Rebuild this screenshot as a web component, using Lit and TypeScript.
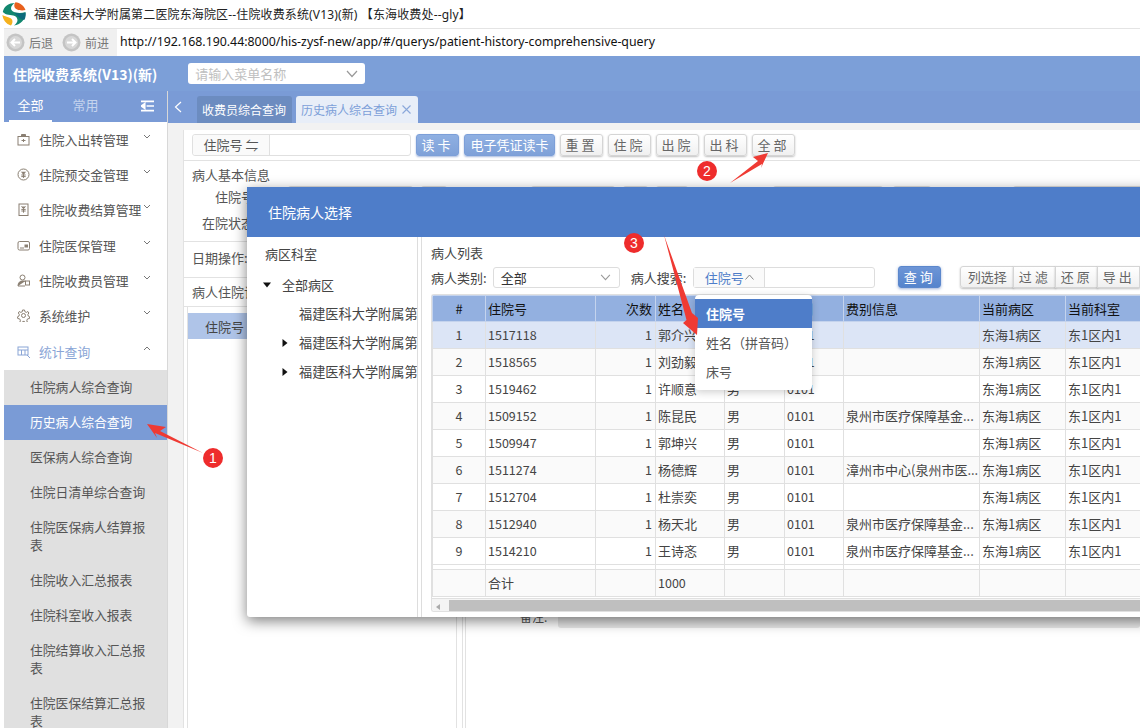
import { LitElement, html, css, svg } from "lit";
import { customElement } from "lit/decorators.js";

const ICONS: Record<string, unknown> = {
  box: svg`<rect x="1" y="3.5" width="11" height="8.5" fill="none"/><path d="M4.5 3.5V1.5h4v2M4.5 7.5h4M6.5 6v3"/>`,
  yen: svg`<circle cx="6.5" cy="6.5" r="5.5" fill="none"/><path d="M4.5 3.8l2 2.5 2-2.5M4.3 7h4.4M6.5 6.3v3.6M4.3 8.6h4.4"/>`,
  bill: svg`<rect x="2" y="1" width="9" height="11.5" fill="none"/><path d="M4.5 3.5l2 2.2 2-2.2M4.3 6.4h4.4M6.5 5.7v4M4.3 8h4.4"/>`,
  wallet: svg`<rect x="1" y="2.5" width="11.5" height="8.5" rx="1.5" fill="none"/><rect x="8" y="6" width="2.5" height="2" /><path d="M3 9h4"/>`,
  user: svg`<circle cx="5.5" cy="3.5" r="2.5" fill="none"/><path d="M1 12c0-3.5 2-5 4.500-5h3M1 12h7"/><rect x="8.500" y="7" width="4" height="4" fill="none"/>`,
  gear: svg`<circle cx="6.500" cy="6.500" r="2" fill="none"/><path fill="none" d="M5.500 1h2l.4 1.700 1.500.7 1.500-.9 1 1.500-1 1.400.3 1.600 1.500.8-.3 1.800-1.700.2-.9 1.400.5 1.600-1.700.8-1.200-1.200h-1.600l-1.200 1.200-1.700-.8.5-1.600-.9-1.400-1.700-.2-.3-1.800 1.500-.8.300-1.600-1-1.400 1-1.500 1.500.9 1.500-.7z"/>`,
  stat: svg`<rect x="1" y="2" width="10" height="8" fill="none"/><path d="M1 5h10M4.500 5v5M8 5v5M10 10l3 3"/>`,
};

const ROWS: [string, string, string, string, string, string][] = [
  ["1", "1517118", "郭介兴", "男", "0101", ""],
  ["2", "1518565", "刘劲毅", "男", "0101", ""],
  ["3", "1519462", "许顺意", "男", "0101", ""],
  ["4", "1509152", "陈昆民", "男", "0101", "泉州市医疗保障基金..."],
  ["5", "1509947", "郭坤兴", "男", "0101", ""],
  ["6", "1511274", "杨德辉", "男", "0101", "漳州市中心(泉州市医..."],
  ["7", "1512704", "杜崇奕", "男", "0101", ""],
  ["8", "1512940", "杨天北", "男", "0101", "泉州市医疗保障基金..."],
  ["9", "1514210", "王诗忞", "男", "0101", "泉州市医疗保障基金..."],
];

const PILLS: [number, number][] = [
  [34, 125], [8, 26], [84, 84], [8, 25], [8, 32], [85, 110], [10, 38], [82, 150],
];

@customElement("app-root")
export class AppRoot extends LitElement {
  static styles = css`
    :host {
      display: block;
      position: relative;
      width: 1140px;
      height: 728px;
      overflow: hidden;
      background: #fff;
      font-family: "Noto Sans CJK SC", "Liberation Sans", sans-serif;
      font-size: 13px;
      color: #555;
    }
    .title {
      height: 28px;
      display: flex;
      align-items: center;
      padding-left: 2px;
      gap: 8px;
      font-family: "Noto Sans", "Noto Sans CJK SC", sans-serif;
      font-size: 12px;
      letter-spacing: .14px;
      color: #222;
      background: #fff;
    }
    .logo { width: 24px; height: 24px; flex: none; }
    .win { border-left: 4px solid #fff; box-shadow: inset 1px 0 0 #d0d0d0; }
    .addr {
      height: 28px;
      display: flex;
      align-items: center;
      background: #f0f0f0;
      font-size: 12px;
      color: #777;
      border-top: 1px solid #e4e4e4;
      box-sizing: border-box;
    }
    .nav {
      display: flex;
      align-items: center;
      gap: 4px;
    }
    .nav svg { width: 19px; height: 19px; }
    .nav.back { margin-left: 2px; }
    .nav.fwd { margin-left: 9px; }
    .url {
      margin-left: 8px;
      flex: 1;
      align-self: stretch;
      background: #fff;
      color: #111;
      line-height: 26px;
      padding-left: 3px;
      font-family: "Noto Sans", sans-serif;
      font-size: 12.350px;
      white-space: nowrap;
    }
    .top {
      height: 35px;
      background: #7c9fd8;
      display: flex;
      align-items: center;
      padding-left: 9px;
      color: #fff;
      font-weight: 700;
      font-size: 14px;
    }
    .search {
      margin-left: 31px;
      width: 177px;
      height: 21px;
      background: #fff;
      border-radius: 3px;
      font-weight: 400;
      font-size: 13px;
      color: #c0c0c0;
      display: flex;
      align-items: center;
      justify-content: space-between;
      padding: 0 7px;
      box-sizing: border-box;
    }
    .search svg { width: 12px; height: 8px; }
    .body { display: flex; height: 644px; overflow: hidden; }
    .side {
      width: 164px;
      flex: none;
      background: #fff;
      border-right: 1px solid #d8d8d8;
      box-sizing: border-box;
      font-size: 12.800px;
    }
    .side-head {
      height: 31px;
      background: #7a9bd6;
      display: flex;
      align-items: stretch;
      position: relative;
      color: #fff;
    }
    .side-tab {
      width: 43px;
      text-align: center;
      line-height: 28px;
      margin-left: 5px;
      font-size: 13px;
      box-sizing: border-box;
    }
    .side-tab.on { border-bottom: 2px solid #fff; }
    .side-tab.off { margin-left: 12px; color: #c5d4ee; }
    .side-head svg { margin: 9px 0 0 auto; width: 13px; height: 12px; margin-right: 13px; }
    .m {
      height: 35.200px;
      display: flex;
      align-items: center;
      padding-left: 13px;
      color: #555;
      white-space: nowrap;
    }
    .m svg.i {
      width: 13px;
      height: 13px;
      margin-right: 9px;
      flex: none;
      stroke: #8a7f72;
      fill: #8a7f72;
      stroke-width: 1;
    }
    .m svg.i * { stroke: inherit; }
    .m .c { position: absolute; left: 143px; width: 8px; height: 5px; margin-top: -6px; }
    .m.stat { color: #8aa5d6; height: 36.800px; padding-bottom: 1px; box-sizing: border-box; }
    .m.stat svg.i { stroke: #8aa5d6; fill: #8aa5d6; }
    .sub { background: #e0e0e0; }
    .sub div { padding: 8.500px 14px 8.500px 26px; line-height: 18px; color: #555; }
    .sub div.on { background: #7a9bd6; color: #fff; }
    .main {
      flex: 1;
      min-width: 0;
      display: flex;
      flex-direction: column;
      background: #f2f2f2;
    }
    .tabs {
      height: 32px;
      background: #7a9bd6;
      display: flex;
      align-items: flex-end;
      color: #fff;
      flex: none;
    }
    .arr { width: 29px; align-self: center; display: flex; padding-left: 6px; box-sizing: border-box; margin-top: -1px; border-left: 0; }
    .arr svg { width: 8px; height: 12px; }
    .tab {
      height: 27px;
      line-height: 27px;
      padding: 0 5px;
      border-radius: 3px 3px 0 0;
      font-size: 12px;
      white-space: nowrap;
    }
    .tab.dark { background: #6c8cc0; width: 85px; margin-right: 4px; }
    .tab.light { background: #e8eef8; color: #7c9fd8; width: 122px; box-sizing: border-box; display: flex; align-items: center; gap: 5px; }
    .tab.light svg { width: 9px; height: 9px; }
    .panel {
      margin: 7px 0 0 15px;
      flex: 1;
      background: #fff;
      border-left: 1px solid #e2e2e2;
      display: flex;
      flex-direction: column;
      min-height: 0;
    }
    .tool {
      flex: none;
      display: flex;
      align-items: center;
      padding-left: 8px;
      gap: 5px;
      border-bottom: 1px solid #e2e2e2;
      box-sizing: border-box;
      height: 31px;
    }
    .group {
      width: 219px;
      height: 22px;
      border: 1px solid #e0e0e0;
      border-radius: 3px;
      box-sizing: border-box;
      display: flex;
      align-items: stretch;
    }
    .group span {
      width: 76px;
      background: #fafafa;
      border-right: 1px solid #e0e0e0;
      line-height: 20px;
      text-align: center;
      border-radius: 3px 0 0 3px;
    }
    .btn {
      height: 22px;
      min-width: 43px;
      box-sizing: border-box;
      border: 1px solid #d5d5d5;
      border-radius: 3px;
      background: linear-gradient(#fff, #f0f0f0);
      box-shadow: 0 1px 2px rgba(0, 0, 0, .25);
      text-align: center;
      line-height: 20px;
      color: #666;
      letter-spacing: 3px;
      white-space: nowrap;
    }
    .btn.pri {
      background: linear-gradient(#8fb0e2, #7fa1d8);
      border-color: #7c9fd8;
      color: #fff;
      box-shadow: 0 1px 2px rgba(60, 100, 180, .45);
    }
    .btn.tight { letter-spacing: 0; width: 91px; }
    .info { padding: 5px 0 0 8px; height: 81px; border-bottom: 1px solid #e2e2e2; box-sizing: border-box; flex: none; color: #555; }
    .info p { margin: 0; line-height: 18px; }
    .info .l { margin: 2px 0 0 23px; display: flex; align-items: center; height: 22px; line-height: 22px; white-space: nowrap; }
    .pill { height: 22px; background: #dedede; border-radius: 3px; flex: none; }
    .info .s { margin: 6px 0 0 10px; }
    .row { padding-left: 8px; height: 36px; line-height: 31px; border-bottom: 1px solid #e2e2e2; box-sizing: border-box; flex: none; }
    .row.b { height: 29px; line-height: 27px; }
    .split { flex: 1; display: flex; min-height: 0; padding-left: 3px; }
    .lp { width: 270px; padding-top: 6px; border-left: 1px solid #e2e2e2; border-right: 1px solid #e2e2e2; box-sizing: border-box; flex: none; }
    .lp .h { width: 59px; height: 26px; background: #afc4e8; line-height: 28px; color: #444; box-sizing: border-box; padding-left: 17px; white-space: nowrap; }
    .gl { width: 6px; border-right: 1px solid #e2e2e2; flex: none; box-sizing: border-box; }
    .rp { margin-left: 2px; border-left: 1px solid #e2e2e2; flex: 1; position: relative; }
    .note { position: absolute; left: 54px; top: 302px; font-size: 12px; color: #555; line-height: 16px; }
    .note-in { position: absolute; left: 92px; top: 302px; right: 0; height: 19px; background: #e8e8e8; border-radius: 3px; }

    .modal {
      position: absolute;
      left: 247px;
      top: 187px;
      width: 1000px;
      height: 430px;
      background: #fff;
      border-radius: 3px;
      box-shadow: 0 4px 14px rgba(0, 0, 0, .5);
      display: flex;
      flex-direction: column;
    }
    .mh {
      height: 50px;
      background: #4e7dc9;
      color: #fff;
      font-size: 14px;
      line-height: 51px;
      padding-left: 21px;
      flex: none;
    }
    .mb { flex: 1; display: flex; min-height: 0; }
    .tree { width: 171px; flex: none; padding: 1px 0 0 18px; box-sizing: border-box; border-right: 1px solid #ddd; overflow: hidden; white-space: nowrap; color: #444; }
    .tree div { height: 29px; line-height: 20px; display: flex; align-items: center; position: relative; font-size: 13px; }
    .tree div.hd { height: 32px; }
    .tree .n1 { padding-left: 17px; }
    .tree .n2 { padding-left: 34px; font-size: 13.200px; }
    .tree svg { position: absolute; width: 8px; height: 8px; }
    .gut { width: 4px; border-right: 1px solid #ddd; flex: none; box-sizing: border-box; }
    .right { flex: 1; min-width: 0; padding: 6px 0 0 9px; }
    .right .t { line-height: 20px; color: #444; }
    .filters { display: flex; align-items: center; height: 22px; margin-top: 3px; color: #444; }
    .sel {
      width: 127px;
      height: 21px;
      margin-left: 6px;
      border: 1px solid #ddd;
      border-radius: 3px;
      box-sizing: border-box;
      display: flex;
      align-items: center;
      justify-content: space-between;
      padding: 0 8px 0 7px;
      color: #333;
    }
    .sel svg { width: 11px; height: 7px; }
    .q-label { margin-left: 11px; }
    .sg {
      margin-left: 7px;
      width: 182px;
      height: 21px;
      border: 1px solid #ddd;
      border-radius: 3px;
      box-sizing: border-box;
      display: flex;
    }
    .sg span { width: 71px; border-right: 1px solid #ddd; background: #fafafa; color: #4e7dc9; text-align: center; display: flex; align-items: center; justify-content: center; gap: 1px; box-sizing: border-box; }
    .sg svg { width: 9px; height: 6px; }
    .query { width: 43px; height: 22px; box-sizing: border-box; margin-left: 23px; border-radius: 3px; border: 1px solid #5b87cc; background: linear-gradient(#6d95d6, #5584cc); color: #fff; text-align: center; line-height: 20px; letter-spacing: 3px; box-shadow: 0 1px 3px rgba(60, 100, 180, .5); }
    .bg { display: flex; margin-left: 19px; }
    .bg .btn { border-radius: 0; margin-left: -1px; letter-spacing: 3px; min-width: 43px; }
    .bg .btn:first-child { border-radius: 3px 0 0 3px; width: 54px; margin-left: 0; letter-spacing: 0; }
    .tw {
      margin: 6px 0 0 0;
      border: 1px solid #e0e0e0;
      border-right: 0;
      border-radius: 3px 0 0 3px;
      width: 780px;
      height: 316px;
      overflow: hidden;
    }
    table { border-collapse: collapse; table-layout: fixed; width: 780px; font-size: 12.500px; color: #444; }
    th, td { border: 1px solid #e0e0e0; padding: 0 2px; text-align: left; white-space: nowrap; overflow: hidden; height: 27px; box-sizing: border-box; line-height: 16px; }
    th { background: #93b0e0; border-color: #c4d3ed; color: #111; font-size: 13px; font-weight: 400; height: 26px; }
    td.c, th.c { text-align: center; }
    td.r, th.r { text-align: right; padding-right: 3px; }
    td.name, td.info-col { font-size: 13px; }
    tr.sel-row td { background: #dce5f6; }
    tr.alt td { background: #fafafa; }
    tr.gap td { height: 5px; padding: 0; line-height: 0; }
    tr.foot td { background: #fafafa; }
    .hs { height: 15px; margin-top: 1px; background: #f4f4f4; display: flex; align-items: center; padding-left: 4px; border-top: 1px solid #e0e0e0; }
    .hs i { width: 0; height: 0; border: 3px solid transparent; border-right: 4px solid #aaa; border-left: 0; }
    .hs b { flex: 1; height: 13px; background: #bfbfbf; margin-left: 9px; }
    .menu {
      position: absolute;
      left: 695px;
      top: 295px;
      width: 117px;
      height: 95px;
      padding-top: 4px;
      box-sizing: border-box;
      background: #fff;
      border-radius: 4px;
      box-shadow: 0 2px 8px rgba(0, 0, 0, .2);
      color: #555;
    }
    .menu div { height: 29px; line-height: 29px; padding-left: 11px; white-space: nowrap; }
    .menu div.on { background: #4e7dc9; color: #fff; font-weight: 700; }
    .menu div.x { height: 29px; line-height: 29px; }
    .ann { position: absolute; left: 0; top: 0; width: 1140px; height: 728px; pointer-events: none; }
    .ann text { font-family: "Liberation Sans", sans-serif; font-size: 14px; fill: #fff; text-anchor: middle; }
  `;

  private menuRow(label: string, icon: string) {
    return html`<div class="m"><svg class="i" viewBox="0 0 13 13">${ICONS[icon]}</svg>${label}
      <svg class="c" viewBox="0 0 8 5"><path d="M1 1l3 3 3-3" fill="none" stroke="#777"/></svg></div>`;
  }

  private navIcon(dir: "l" | "r") {
    const d = dir === "l" ? "M14 9.500H6M9 6L5.500 9.500 9 13" : "M5 9.500h8M10 6l3.500 3.500L10 13";
    return html`<svg viewBox="0 0 19 19"><circle cx="9.500" cy="9.500" r="9" fill="#c4c4c4"/><circle cx="9.500" cy="9.500" r="6.500" fill="#d8d8d8"/><path d="${d}" fill="none" stroke="#fff" stroke-width="2"/></svg>`;
  }

  render() {
    const chev = html`<svg viewBox="0 0 12 8"><path d="M1 1l5 5.500L11 1" fill="none" stroke="#999" stroke-width="1.200"/></svg>`;
    return html`
      <div class="title">
        <svg class="logo" viewBox="0 0 24 24">
          <circle cx="12" cy="12" r="11.800" fill="#fff"/>
          <path d="M.8 10C2 4 7 1 13 1c-4 2-5.500 6.500-2 8.500 4 2 9 1.500 12.500 .5.800 7-5 13-11.500 13.500 4.500-3 4.500-7.500.8-9.500C9 12.500 4 13.500.8 10z" fill="#12876f"/>
          <path d="M12 10.500c4 1.500 8 1 11.500 .2.400 2.500 0 5-1 7-3 1-5.500-2.500-10.500-7.200z" fill="#0d6a7c"/>
          <path d="M13.500 .3C18 .6 22 4 23.500 8 19 9 13.500 8 12.500 5c-.5-2 0-3.500 1-4.700z" fill="#e8601c"/>
          <path d="M.4 13C4 15 9 15 10.200 18c.7 2 0 4-1.200 5.500C4 22 1 18 .4 13z" fill="#f5b11d"/>
        </svg>
        <span>福建医科大学附属第二医院东海院区--住院收费系统(V13)(新) 【东海收费处--gly】</span>
      </div>
      <div class="win">
        <div class="addr">
          <span class="nav back">${this.navIcon("l")}后退</span>
          <span class="nav fwd">${this.navIcon("r")}前进</span>
          <div class="url">http://192.168.190.44:8000/his-zysf-new/app/#/querys/patient-history-comprehensive-query</div>
        </div>
        <div class="top">住院收费系统(V13)(新)
          <div class="search">请输入菜单名称 ${chev}</div>
        </div>
        <div class="body">
          <aside class="side">
            <div class="side-head">
              <div class="side-tab on">全部</div>
              <div class="side-tab off">常用</div>
              <svg viewBox="0 0 14 12"><path d="M0 1h14M6 6h8M0 11h14M4 3.500L.5 6 4 8.500z" fill="#fff" stroke="#fff" stroke-width="1.800"/></svg>
            </div>
            ${this.menuRow("住院入出转管理", "box")}
            ${this.menuRow("住院预交金管理", "yen")}
            ${this.menuRow("住院收费结算管理", "bill")}
            ${this.menuRow("住院医保管理", "wallet")}
            ${this.menuRow("住院收费员管理", "user")}
            ${this.menuRow("系统维护", "gear")}
            <div class="m stat"><svg class="i" viewBox="0 0 13 13">${ICONS.stat}</svg>统计查询
              <svg class="c" viewBox="0 0 8 5"><path d="M1 4l3-3 3 3" fill="none" stroke="#777"/></svg></div>
            <div class="sub">
              <div>住院病人综合查询</div>
              <div class="on">历史病人综合查询</div>
              <div>医保病人综合查询</div>
              <div>住院日清单综合查询</div>
              <div>住院医保病人结算报表</div>
              <div>住院收入汇总报表</div>
              <div>住院科室收入报表</div>
              <div>住院结算收入汇总报表</div>
              <div>住院医保结算汇总报表</div>
            </div>
          </aside>
          <main class="main">
            <div class="tabs">
              <div class="arr"><svg viewBox="0 0 8 12"><path d="M7 1L1.500 6 7 11" fill="none" stroke="#fff" stroke-width="1.200"/></svg></div>
              <div class="tab dark">收费员综合查询</div>
              <div class="tab light">历史病人综合查询<svg viewBox="0 0 9 9"><path d="M.5 .5l8 8M8.500 .5l-8 8" fill="none" stroke="#8aa8da" stroke-width="1.100"/></svg></div>
            </div>
            <div class="panel">
              <div class="tool">
                <div class="group"><span>住院号 ⇋</span></div>
                <div class="btn pri">读卡</div>
                <div class="btn pri tight">电子凭证读卡</div>
                <div class="btn">重置</div>
                <div class="btn">住院</div>
                <div class="btn">出院</div>
                <div class="btn">出科</div>
                <div class="btn">全部</div>
              </div>
              <div class="info">
                <p>病人基本信息</p>
                <p class="l"><span>住院号</span>${PILLS.map(([m, w]) => html`<span class="pill" style="margin-left:${m}px;width:${w}px"></span>`)}</p>
                <p class="s">在院状态</p>
              </div>
              <div class="row">日期操作:</div>
              <div class="row b">病人住院记录</div>
              <div class="split">
                <div class="lp"><div class="h">住院号</div></div>
                <div class="gl"></div>
                <div class="rp"><span class="note">备注:</span><div class="note-in"></div></div>
              </div>
            </div>
          </main>
        </div>
      </div>

      <section class="modal">
        <div class="mh">住院病人选择</div>
        <div class="mb">
          <div class="tree">
            <div class="hd">病区科室</div>
            <div class="n1"><svg style="left:-2px" viewBox="0 0 8 8"><path d="M0 1.500h8L4 6.500z" fill="#111"/></svg>全部病区</div>
            <div class="n2">福建医科大学附属第二医院</div>
            <div class="n2"><svg style="left:16px" viewBox="0 0 8 8"><path d="M1.500 0v8l5-4z" fill="#111"/></svg>福建医科大学附属第二医院</div>
            <div class="n2"><svg style="left:16px" viewBox="0 0 8 8"><path d="M1.500 0v8l5-4z" fill="#111"/></svg>福建医科大学附属第二医院</div>
          </div>
          <div class="gut"></div>
          <div class="right">
            <div class="t">病人列表</div>
            <div class="filters">
              <span>病人类别:</span>
              <div class="sel">全部 ${chev}</div>
              <span class="q-label">病人搜索:</span>
              <div class="sg"><span>住院号<svg viewBox="0 0 9 6"><path d="M.5 5.500L4.500 1l4 4.500" fill="none" stroke="#888"/></svg></span></div>
              <div class="query">查询</div>
              <div class="bg">
                <div class="btn">列选择</div><div class="btn">过滤</div><div class="btn">还原</div><div class="btn">导出</div>
              </div>
            </div>
            <div class="tw">
              <table>
                <colgroup>
                  <col style="width:53px"/><col style="width:110px"/><col style="width:60px"/><col style="width:69px"/>
                  <col style="width:60px"/><col style="width:59px"/><col style="width:136px"/><col style="width:86px"/><col style="width:147px"/>
                </colgroup>
                <thead><tr>
                  <th class="c">#</th><th>住院号</th><th class="r">次数</th><th>姓名</th><th>性别</th><th>费别</th><th>费别信息</th><th>当前病区</th><th>当前科室</th>
                </tr></thead>
                <tbody>
                  ${ROWS.map((r, i) => html`<tr class="${i === 0 ? "sel-row" : i % 2 === 1 ? "alt" : ""}">
                    <td class="c">${r[0]}</td><td>${r[1]}</td><td class="r">1</td><td class="name">${r[2]}</td><td class="name">${r[3]}</td><td>${r[4]}</td><td class="info-col">${r[5]}</td><td class="info-col">东海1病区</td><td class="info-col">东1区内1</td>
                  </tr>`)}
                  <tr class="gap"><td></td><td></td><td></td><td></td><td></td><td></td><td></td><td></td><td></td></tr>
                  <tr class="foot"><td></td><td class="name">合计</td><td></td><td>1000</td><td></td><td></td><td></td><td></td><td></td></tr>
                </tbody>
              </table>
              <div class="hs"><i></i><b></b></div>
            </div>
          </div>
        </div>
      </section>

      <div class="menu">
        <div class="on">住院号</div>
        <div class="x">姓名（拼音码）</div>
        <div class="x">床号</div>
      </div>

      <svg class="ann" viewBox="0 0 1140 728">
        <path d="M147 424L166 427 160 431 203 453 155 433 157 438z" fill="#ef3a33"/>
        <circle cx="213" cy="458" r="10" fill="#ee2c2c"/><text x="213" y="463">1</text>
        <path d="M768 153L753 157 758 161 730 183 762 164 761 168z" fill="#ef3a33"/>
        <circle cx="707" cy="171" r="10" fill="#ee2c2c"/><text x="707" y="176">2</text>
        <path d="M664 235L692 313 698 318 697 335 683 323 686.500 320z" fill="#ef3a33"/>
        <circle cx="634" cy="243" r="10" fill="#ee2c2c"/><text x="634" y="248">3</text>
      </svg>
    `;
  }
}
